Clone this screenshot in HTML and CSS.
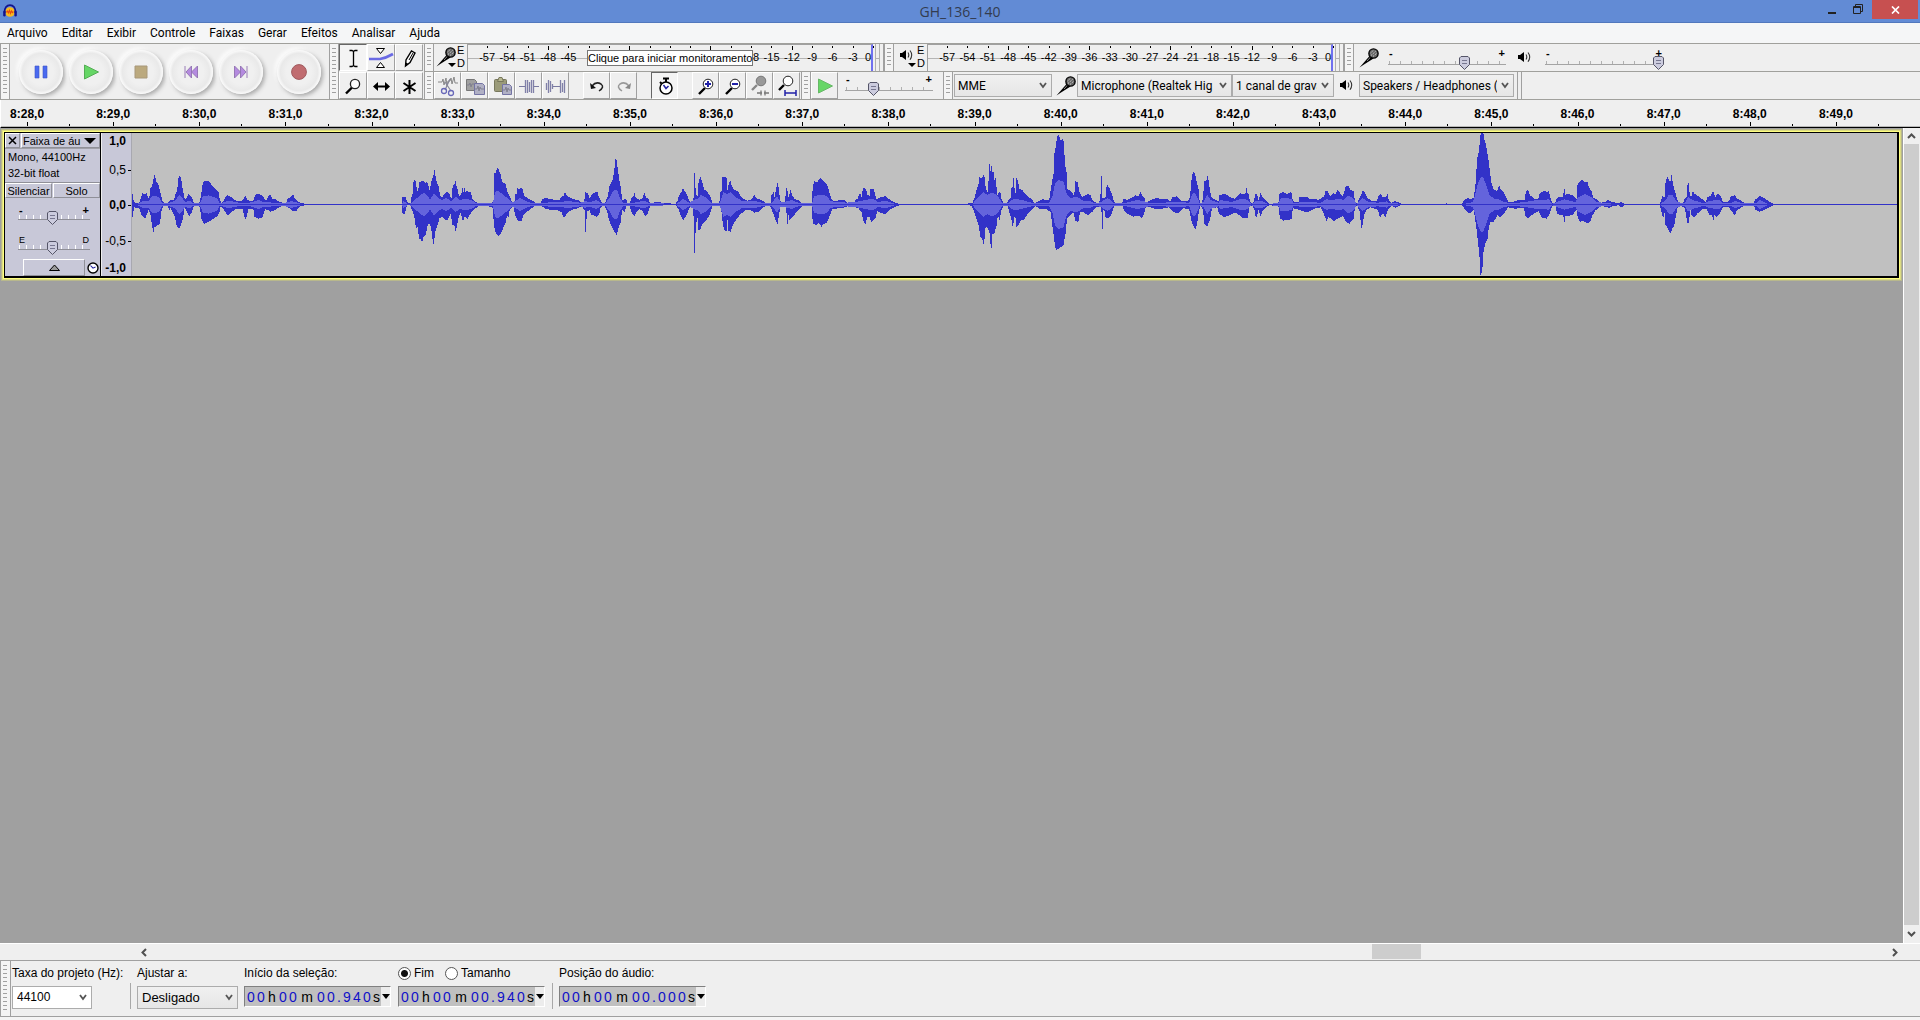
FILE: index.html
```html
<!DOCTYPE html>
<html lang="pt">
<head>
<meta charset="utf-8">
<title>GH_136_140</title>
<link rel="stylesheet" href="styles.css">
</head>
<body>
<svg class="defs" aria-hidden="true">
  <symbol id="mic" viewBox="0 0 20 20">
    <path d="M0.5 19.5 L11 7.5 L14.5 10.5 L5 16.5 Z" fill="#000"/>
    <path d="M8 13 L12 8.6" stroke="#888" stroke-width="1"/>
    <circle cx="14.5" cy="5.5" r="4.6" fill="#666" stroke="#000" stroke-width="1.4"/>
    <path d="M11.5 5 L15 1.8 M12 7.5 L17 3 M14 8.5 L18 5" stroke="#ddd" stroke-width="0.9" stroke-dasharray="1.4 1"/>
  </symbol>
  <symbol id="speaker" viewBox="0 0 13 12">
    <path d="M0 4 H2 L6 1 V11 L2 8 H0 Z" fill="#000"/>
    <path d="M8 3.5 Q9.6 6 8 8.5 M10 1.5 Q13.4 6 10 10.8" fill="none" stroke="#333" stroke-width="1.1"/>
  </symbol>
  <symbol id="clock" viewBox="0 0 12 12">
    <circle cx="6" cy="6" r="5" fill="#fff" stroke="#000" stroke-width="1.4"/>
    <path d="M3.5 3.5 L6 6.2 L8.5 5" fill="none" stroke="#2222a0" stroke-width="1.1"/>
  </symbol>
</svg>

<header class="titlebar">
  <svg class="logo" viewBox="0 0 14 14"><circle cx="7" cy="8" r="4.8" fill="#f8b81c"/><path d="M3.4 8.4 l1-1.4 1 2 1-2.600 1 3 1-2.400 1 1.600 1-1" fill="none" stroke="#e84a10" stroke-width="1.1"/><path d="M1.600 9 C0.500 -1.600 13.500 -1.600 12.400 9" fill="none" stroke="#14148c" stroke-width="1.800"/><rect x="0.200" y="6.500" width="2.400" height="6" rx="1.200" fill="#14148c"/><rect x="11.400" y="6.500" width="2.400" height="6" rx="1.200" fill="#14148c"/></svg>
  <h1>GH_136_140</h1>
  <div class="winbtns">
    <button class="wbtn" aria-label="Minimizar"><svg width="10" height="12"><rect x="1" y="9" width="8" height="2" fill="#222"/></svg></button>
    <button class="wbtn" aria-label="Restaurar"><svg width="11" height="12"><path d="M0.5 3.5 h7 v7 h-7 Z M0.5 4.5 h7 M2.5 3 V1.5 H9.5 V8.5 H8" fill="none" stroke="#222"/></svg></button>
    <button class="wbtn close" aria-label="Fechar"><svg width="9" height="8"><path d="M1 0.5 L8 7.5 M8 0.5 L1 7.5" stroke="#fff" stroke-width="1.7"/></svg></button>
  </div>
</header>

<nav class="menu">
  <a href="#">Arquivo</a><a href="#">Editar</a><a href="#">Exibir</a><a href="#">Controle</a><a href="#">Faixas</a><a href="#">Gerar</a><a href="#">Efeitos</a><a href="#">Analisar</a><a href="#">Ajuda</a>
</nav>

<section class="dock">
  <div class="grip"></div>
  <div class="transport">
    <button class="round" aria-label="Pausar"><svg width="16" height="16"><path d="M2 2h4v12H2z M10 2h4v12h-4z" fill="#4a6af0" stroke="#3c54c8" stroke-width="0.6"/></svg></button>
    <button class="round" aria-label="Reproduzir"><svg width="16" height="16"><path d="M1.5 1 L15.5 8 L1.5 15 Z" fill="#66d666" stroke="#55ad55"/></svg></button>
    <button class="round" aria-label="Parar"><svg width="16" height="16"><path d="M2 2h12v12H2z" fill="#bba97e" stroke="#a8987a"/></svg></button>
    <button class="round" aria-label="Início"><svg width="16" height="16"><path d="M2 2 V14 M8.5 2 V14 L3 8 Z M14.5 2 V14 L8.5 8 Z" fill="#b48adf" stroke="#9070b0" stroke-width="0.9"/></svg></button>
    <button class="round" aria-label="Fim"><svg width="16" height="16"><path d="M14 2 V14 M7.5 2 V14 L13 8 Z M1.5 2 V14 L7.5 8 Z" fill="#b48adf" stroke="#9070b0" stroke-width="0.9"/></svg></button>
    <button class="round rec" aria-label="Gravar"><svg width="16" height="16"><circle cx="8" cy="8" r="7.4" fill="#c06c70" stroke="#a05a5e"/></svg></button>
  </div>
  <div class="grip"></div>
  <div class="tools">
    <button class="tb on" aria-label="Seleção"><svg width="24" height="22"><path d="M8.500 3.500 H11 L12.500 4.500 L14 3.500 H16.500 M12.500 4 V19 M8.500 19.500 H11 L12.500 18.500 L14 19.500 H16.500" fill="none" stroke="#000" stroke-width="1.3"/></svg></button>
    <button class="tb" aria-label="Envelope"><svg width="26" height="22"><path d="M1 12 H12 Q18 11 25 7" fill="none" stroke="#6a6ae4" stroke-width="2.6"/><path d="M8.500 1.500 H16.500 L12.500 6.500 Z M8.500 20.500 H16.500 L12.500 15.500 Z" fill="#fff" stroke="#000"/></svg></button>
    <button class="tb" aria-label="Desenho"><svg width="24" height="22"><path d="M8.500 19 L9 13 L14.500 4 L18 6 L13 15.500 Z" fill="#fff" stroke="#000" stroke-width="1.4"/><path d="M8.500 19.500 L9 15.500 L11.500 17 Z" fill="#000"/><path d="M12 13 L16 6" stroke="#000"/></svg></button>
    <button class="tb" aria-label="Zoom"><svg width="24" height="22"><path d="M5 18.500 L11 12.500" stroke="#000" stroke-width="2.4"/><circle cx="14" cy="9" r="4.600" fill="#fff" stroke="#222" stroke-width="1.300"/></svg></button>
    <button class="tb" aria-label="Mover"><svg width="24" height="22"><path d="M6 11.500 H19" stroke="#000" stroke-width="2"/><path d="M4 11.500 L9 7 V16 Z M21 11.500 L16 7 V16 Z" fill="#000"/></svg></button>
    <button class="tb" aria-label="Multiferramenta"><svg width="24" height="22"><path d="M12.500 5 V19 M6.500 8 L18.500 16 M18.500 8 L6.500 16" stroke="#000" stroke-width="2"/></svg></button>
  </div>
  <div class="dockrows">
    <div class="row">
      <div class="grip"></div>
      <div class="meterbar">
        <button class="micbtn" aria-label="Medidor de gravação"><svg width="20" height="20"><use href="#mic"/></svg><i class="drop"></i></button>
        <div class="lr"><span>E</span><span>D</span></div>
        <div class="meter"><span>-57</span><span>-54</span><span>-51</span><span class="maj">-48</span><span>-45</span><span></span><span></span><span class="maj"></span><span></span><span></span><span></span><span class="maj"></span><span></span><span>-18</span><span>-15</span><span class="maj">-12</span><span>-9</span><span>-6</span><span>-3</span><span class="zero">0</span></div>
        <div class="clip"></div>
        <div class="tip" role="tooltip">Clique para iniciar monitoramento</div>
      </div>
      <div class="grip"></div>
      <div class="meterbar">
        <button class="micbtn spk" aria-label="Medidor de reprodução"><svg width="13" height="12"><use href="#speaker"/></svg><i class="drop"></i></button>
        <div class="lr"><span>E</span><span>D</span></div>
        <div class="meter"><span>-57</span><span>-54</span><span>-51</span><span class="maj">-48</span><span>-45</span><span>-42</span><span>-39</span><span class="maj">-36</span><span>-33</span><span>-30</span><span>-27</span><span class="maj">-24</span><span>-21</span><span>-18</span><span>-15</span><span class="maj">-12</span><span>-9</span><span>-6</span><span>-3</span><span class="zero">0</span></div>
        <div class="clip"></div>
      </div>
      <div class="grip"></div>
      <div class="mixer">
        <svg width="20" height="20"><use href="#mic"/></svg>
        <label class="slide"><span>-</span><span>+</span><input type="range" min="0" max="100" value="66" aria-label="Volume de gravação"></label>
        <svg class="spkicon" width="13" height="12"><use href="#speaker"/></svg>
        <label class="slide"><span>-</span><span>+</span><input type="range" min="0" max="100" value="100" aria-label="Volume de reprodução"></label>
      </div>
    </div>
    <div class="row">
      <div class="grip"></div>
      <div class="edit">
        <button class="tb" aria-label="Recortar"><svg width="24" height="22"><path d="M2 7 h4 l1-3 1 6 2-7 1 8 1-5 h2 l1-3 1 6 2-7 1 6 h3" fill="none" stroke="#888"/><path d="M14 4 L9 15 M9 7 L15 16" stroke="#889" stroke-width="1.200"/><circle cx="8" cy="16" r="2.500" fill="none" stroke="#6868b8" stroke-width="1.300"/><circle cx="15" cy="18" r="2.500" fill="none" stroke="#6868b8" stroke-width="1.300"/></svg></button>
        <button class="tb" aria-label="Copiar"><svg width="24" height="22"><path d="M3.500 4.500 h8 l2 2 v9 h-10 z" fill="#a0a0a0" stroke="#777"/><path d="M11.500 8.500 h8 l2 2 v9 h-10 z" fill="#b0b0c4" stroke="#7474a4"/><path d="M4 10 h2l1-2 1 4 1-3 h2 M12 14 h2l1-3 1 5 1-4 1 2 h3" fill="none" stroke="#80808f"/></svg></button>
        <button class="tb" aria-label="Colar"><svg width="24" height="22"><rect x="4.500" y="4.500" width="12" height="12" rx="1" fill="#9a9a78" stroke="#77775c"/><path d="M7.500 6.500 L9 2.500 H12 L13.500 6.500 Z" fill="#b8b890" stroke="#77775c"/><path d="M12.500 9.500 h7 l2 2 v8 h-9 z" fill="#b0b0c4" stroke="#7474a4"/><path d="M13 15 h2l1-3 1 5 1-4 1 2 h2" fill="none" stroke="#80808f"/></svg></button>
        <button class="tb" aria-label="Aparar"><svg width="24" height="22"><path d="M2 11.500 H8 M17 11.500 H22" stroke="#7878a0"/><path d="M8.500 11 V5 M8.500 11 V18 M10.500 5 V18 M12.500 7 V17 M14.500 5 V18 M16.500 5 V18" stroke="#8080a8" stroke-width="1.300"/></svg></button>
        <button class="tb" aria-label="Silenciar seleção"><svg width="24" height="22"><path d="M8 11.500 H17" stroke="#7878a0"/><path d="M2.500 8 V15 M4.500 5 V18 M6.500 6 V17 M8.500 9 V14 M16.500 5 V18 M18.500 8 V17 M20.500 5 V18" stroke="#8080a8" stroke-width="1.300"/></svg></button>
        <button class="tb gap" aria-label="Desfazer"><svg width="24" height="22"><path d="M7 11 Q11 6 16 9 Q20 12 14 16" fill="none" stroke="#222" stroke-width="1.500"/><path d="M5 8 L6 14 L11 13 Z" fill="#111"/></svg></button>
        <button class="tb" aria-label="Refazer"><svg width="24" height="22"><path d="M17 11 Q13 6 8 9 Q4 12 10 16" fill="none" stroke="#999" stroke-width="1.500"/><path d="M19 8 L18 14 L13 13 Z" fill="#888"/></svg></button>
        <button class="tb gap on" aria-label="Sincronizar faixas"><svg width="24" height="22"><path d="M10 3.500 H16 M13 4 V7 M7 7 L8.500 8.500" stroke="#000" stroke-width="2"/><circle cx="13" cy="13" r="6" fill="#fff" stroke="#000" stroke-width="1.500"/><path d="M10.500 10 L13 13.500 L15.500 11" fill="none" stroke="#2222a0" stroke-width="1.500"/></svg></button>
        <button class="tb gap" aria-label="Ampliar"><svg width="24" height="22"><path d="M5 19 L11 13" stroke="#000" stroke-width="2.400"/><circle cx="14" cy="9" r="4.800" fill="#fff" stroke="#222"/><path d="M11 9 H17 M14 6 V12" stroke="#2222a8" stroke-width="2"/></svg></button>
        <button class="tb" aria-label="Reduzir"><svg width="24" height="22"><path d="M5 19 L11 13" stroke="#000" stroke-width="2.400"/><circle cx="14" cy="9" r="4.800" fill="#fff" stroke="#222"/><path d="M11 9 H17" stroke="#2222a8" stroke-width="2"/></svg></button>
        <button class="tb" aria-label="Ajustar seleção"><svg width="24" height="22"><path d="M4 15 L9 10" stroke="#888" stroke-width="2.400"/><circle cx="13" cy="6" r="4.800" fill="#999" stroke="#777"/><path d="M9 18 H14 M16 18 H21 M13 15.500 V20.500 M17 15.500 V20.500" stroke="#777" stroke-width="1.300"/></svg></button>
        <button class="tb" aria-label="Ajustar projeto"><svg width="24" height="22"><path d="M4 15 L9 10" stroke="#000" stroke-width="2.400"/><circle cx="13" cy="6" r="4.800" fill="#fff" stroke="#222"/><path d="M10 18 H21 M10 15 V21 M21 15 V21" stroke="#2222a8" stroke-width="1.500"/></svg></button>
      </div>
      <div class="grip"></div>
      <div class="speed">
        <button class="tb" aria-label="Reproduzir na velocidade"><svg width="24" height="22"><path d="M5.500 4 L19.500 11 L5.500 18 Z" fill="#66d666" stroke="#66b866"/></svg></button>
        <label class="slide short"><span>-</span><span>+</span><input type="range" min="0" max="100" value="31" aria-label="Velocidade"></label>
      </div>
      <div class="grip"></div>
      <div class="devices">
        <select class="w-host" aria-label="Host de áudio"><option>MME</option></select>
        <svg class="m1" width="20" height="20"><use href="#mic"/></svg>
        <select class="w-in" aria-label="Dispositivo de gravação"><option>Microphone (Realtek Hig</option></select><select class="w-ch" aria-label="Canais de gravação"><option>1 canal de gravação</option></select>
        <svg class="m2" width="13" height="12"><use href="#speaker"/></svg>
        <select class="w-out" aria-label="Dispositivo de reprodução"><option>Speakers / Headphones (</option></select>
      </div>
    </div>
  </div>
</section>

<div class="timeline"><div class="ticks">
  <span>8:28,0</span><span>8:29,0</span><span>8:30,0</span><span>8:31,0</span><span>8:32,0</span><span>8:33,0</span><span>8:34,0</span><span>8:35,0</span><span>8:36,0</span><span>8:37,0</span><span>8:38,0</span><span>8:39,0</span><span>8:40,0</span><span>8:41,0</span><span>8:42,0</span><span>8:43,0</span><span>8:44,0</span><span>8:45,0</span><span>8:46,0</span><span>8:47,0</span><span>8:48,0</span><span>8:49,0</span>
</div></div>

<main class="work">
  <div class="tracks">
    <article class="track">
      <div class="panel">
        <div class="head">
          <button class="x" aria-label="Fechar faixa"><svg width="9" height="9"><path d="M1 1 L8 8 M8 1 L1 8" stroke="#000" stroke-width="1.500"/></svg></button>
          <button class="name">Faixa de áu<i class="drop"></i></button>
        </div>
        <div class="info">Mono, 44100Hz<br>32-bit float</div>
        <div class="mute"><button>Silenciar</button><button>Solo</button></div>
        <label class="slide small"><span>-</span><span>+</span><input type="range" min="0" max="100" value="47" aria-label="Ganho"></label>
        <label class="slide small pan"><span>E</span><span>D</span><input type="range" min="0" max="100" value="47" aria-label="Panorâmica"></label>
        <div class="foot"><button class="fold" aria-label="Recolher"><svg width="11" height="7"><path d="M0.500 6.500 L5.500 1 L10.500 6.500 Z" fill="#999" stroke="#000"/></svg></button><svg width="12" height="12"><use href="#clock"/></svg></div>
      </div>
      <div class="vruler"><b>1,0</b><span class="t">0,5</span><b class="t">0,0</b><span class="t">-0,5</span><b>-1,0</b></div>
      <div class="wave">
        <svg width="1765" height="143" shape-rendering="crispEdges">
          <svg x="-132" y="-13" width="320" height="170" viewBox="0 0 960 510" preserveAspectRatio="none">
            <polygon class="peak" points="396,222 399,222 401,245 405,249 420,247 422,235 427,220 434,222 441,220 444,236 449,228 451,205 456,200 460,178 463,165 466,170 468,184 474,190 478,205 484,228 488,246 495,250 504,248 511,240 522,240 526,222 532,210 534,180 538,168 543,172 546,195 550,215 554,238 561,232 566,222 570,225 577,235 580,247 592,251 598,247 602,232 606,205 609,187 614,181 622,184 628,184 636,196 645,205 655,214 659,238 664,249 670,243 676,232 682,225 692,230 700,238 712,244 726,243 732,235 736,227 742,240 752,244 761,240 765,224 775,221 787,226 795,240 801,240 805,228 812,224 816,236 826,238 840,246 858,250 864,234 872,232 880,223 884,236 892,244 902,249 914,252 960,252 960,255 914,255 900,258 890,272 882,275 872,268 864,262 858,256 840,260 826,270 812,275 803,270 795,268 787,292 775,296 763,290 760,266 745,268 738,298 735,298 728,268 710,266 695,275 684,288 672,270 662,258 658,280 650,290 640,296 628,304 612,312 604,295 600,262 592,256 580,260 576,275 568,290 560,275 554,262 550,290 544,312 538,326 530,318 526,296 520,280 511,262 508,272 504,258 490,258 484,275 480,310 470,318 463,322 460,338 456,315 452,288 446,268 440,285 436,296 424,285 418,266 402,262 398,292 396,285"/>
            <polygon id="ra" class="rms" points="400,253 416,250 430,242 445,244 455,230 465,226 478,234 486,248 505,250 525,242 538,224 548,236 556,246 570,242 580,250 600,250 608,230 625,226 650,234 660,250 685,242 715,248 750,248 775,240 790,246 850,250 875,243 900,250 910,253"/>
            <use href="#ra" transform="matrix(1 0 0 -1 0 507)"/>
          </svg>
          <svg x="168" y="-13" width="560" height="170" viewBox="0 0 1568 510" preserveAspectRatio="none">
            <polygon class="peak" points="0,250 10,250 11,252 286,252 287,232 296,231 299,243 303,250 311,249 312,232 317,218 318,180 325,182 327,214 331,210 334,187 340,183 348,184 350,190 355,186 359,192 362,214 366,196 369,180 374,166 376,147 379,164 382,182 388,200 392,225 398,232 404,222 412,216 418,222 424,236 427,204 431,192 434,192 435,180 438,198 442,208 445,232 452,220 455,204 458,216 460,200 463,216 468,212 473,218 479,215 482,236 490,246 505,250 520,250 536,249 542,244 543,160 549,158 552,142 557,150 562,165 566,184 572,190 576,192 580,214 588,232 594,246 600,250 602,224 607,222 608,204 612,208 618,204 623,206 628,228 634,232 640,236 650,242 660,248 672,250 680,236 690,234 705,238 715,240 726,240 732,230 738,228 742,216 748,228 756,232 766,238 780,240 788,250 796,249 798,216 806,220 810,234 818,224 824,218 833,216 836,228 842,240 846,250 854,250 858,236 863,226 865,204 870,190 876,178 880,150 883,117 887,122 890,150 894,178 899,208 902,240 908,238 914,238 916,250 924,250 927,234 933,230 936,218 940,232 950,240 958,236 964,218 969,232 975,236 980,249 1000,246 1014,248 1034,250 1052,252 1058,240 1061,226 1068,216 1072,206 1078,214 1084,226 1092,246 1098,249 1100,236 1103,232 1103,158 1106,158 1108,222 1113,228 1115,190 1118,182 1120,168 1124,180 1128,192 1131,208 1140,214 1148,228 1155,248 1174,250 1177,218 1181,210 1182,172 1190,170 1195,176 1197,210 1201,190 1205,180 1208,196 1214,208 1226,214 1234,228 1242,236 1252,242 1262,240 1268,232 1272,222 1276,234 1286,238 1296,242 1305,251 1318,250 1320,226 1326,216 1328,236 1333,206 1337,190 1341,205 1344,242 1350,250 1358,248 1361,206 1364,198 1366,228 1370,232 1372,204 1378,226 1386,238 1396,240 1402,248 1412,252 1432,252 1434,222 1437,196 1440,182 1448,188 1452,180 1458,174 1464,180 1474,192 1480,206 1484,226 1490,240 1500,244 1510,240 1525,240 1532,250 1553,252 1556,238 1562,236 1564,226 1568,222 1568,272 1564,264 1556,262 1552,255 1534,256 1528,262 1510,264 1490,268 1480,296 1474,308 1464,314 1460,320 1452,308 1444,316 1436,310 1432,256 1412,255 1400,264 1386,282 1378,294 1370,300 1366,270 1365,312 1361,264 1356,255 1346,258 1342,280 1337,311 1332,302 1326,282 1320,268 1316,255 1300,260 1286,274 1272,278 1262,270 1248,270 1234,282 1222,298 1212,314 1206,335 1199,332 1197,300 1195,335 1188,330 1184,312 1180,275 1175,256 1155,258 1148,282 1142,294 1134,305 1126,314 1120,332 1115,328 1113,294 1108,316 1106,398 1103,398 1102,290 1099,256 1090,264 1084,282 1074,300 1068,292 1060,268 1052,255 1000,256 980,258 974,280 966,288 958,272 950,268 942,276 936,288 928,276 922,256 914,258 909,276 902,268 898,308 892,322 887,345 880,334 872,318 865,300 860,275 852,256 842,262 838,282 830,290 816,284 810,270 803,276 801,335 798,335 797,272 790,258 780,264 766,268 752,276 745,284 739,294 732,276 718,270 690,268 676,258 660,256 650,264 634,276 626,284 620,304 610,302 602,284 598,258 592,264 585,275 583,302 580,282 576,306 570,322 564,338 555,348 548,338 543,318 540,264 520,255 505,256 492,264 480,276 468,298 462,288 456,305 450,278 444,292 440,316 436,335 433,318 427,314 422,282 412,302 404,296 396,290 390,296 384,320 378,336 375,372 372,372 370,340 364,312 358,314 352,344 346,350 342,369 338,358 333,356 330,318 325,326 320,290 314,270 308,256 300,256 292,284 287,280 286,255 11,255 10,257 0,257"/>
            <polygon id="rb" class="rms" points="286,253 288,244 296,246 300,252 312,250 320,240 330,232 346,218 355,226 364,238 376,220 385,232 396,240 410,234 424,244 435,230 448,240 465,236 480,240 495,250 540,250 546,216 552,212 565,220 580,234 592,246 602,244 616,234 630,242 650,250 680,248 735,246 745,242 785,248 798,244 815,246 830,240 845,250 856,248 866,234 878,212 888,210 896,234 904,248 926,250 945,246 965,242 978,250 1056,251 1072,236 1090,248 1102,240 1115,236 1122,224 1135,232 1152,248 1176,248 1186,216 1195,222 1207,216 1220,232 1240,244 1272,242 1300,250 1322,248 1336,228 1346,248 1362,244 1376,240 1396,248 1434,248 1440,228 1458,224 1476,228 1486,244 1530,248 1568,244 1568,253"/>
            <use href="#rb" transform="matrix(1 0 0 -1 0 507)"/>
          </svg>
          <svg x="728" y="-13" width="560" height="170" viewBox="0 0 1568 510" preserveAspectRatio="none">
            <polygon class="peak" points="0,222 2,220 4,234 8,206 12,202 18,210 20,224 27,228 29,206 38,206 42,222 46,238 56,232 72,228 82,238 95,246 112,252 302,252 305,249 315,248 320,236 326,212 332,190 334,172 342,174 345,165 350,172 352,208 358,216 360,180 361,130 364,132 365,156 368,136 371,156 373,148 376,180 380,174 382,200 385,224 390,216 394,218 396,238 402,250 412,250 415,240 422,234 424,204 428,200 429,174 432,174 433,220 436,220 437,174 442,180 446,206 456,212 464,224 472,232 482,238 488,250 500,244 512,238 530,240 534,208 540,172 544,150 544,104 548,80 552,50 556,45 562,60 568,58 571,64 574,138 578,150 581,208 590,212 596,222 600,226 603,184 610,186 614,216 622,232 630,226 638,222 646,226 650,238 660,248 668,250 673,238 675,168 678,168 679,234 688,232 691,190 698,204 704,218 710,240 714,250 734,250 738,236 748,240 760,234 772,226 780,228 785,216 790,226 796,232 800,248 812,242 824,236 832,232 842,238 862,238 868,244 876,230 880,232 886,228 894,238 904,244 918,242 924,232 927,190 930,165 935,153 939,165 943,186 948,208 950,238 955,252 960,236 964,184 970,180 973,168 976,180 980,210 984,232 996,240 1004,244 1006,226 1020,222 1030,226 1040,234 1050,236 1056,228 1064,220 1076,222 1080,220 1082,202 1084,220 1088,222 1092,246 1100,250 1104,238 1108,220 1112,222 1116,240 1122,218 1128,234 1136,240 1146,251 1166,251 1172,246 1174,222 1184,216 1196,222 1208,216 1212,244 1228,246 1230,232 1240,230 1250,230 1262,238 1272,236 1284,240 1292,234 1300,228 1304,212 1310,214 1316,228 1324,220 1332,222 1338,208 1344,220 1352,228 1356,218 1359,200 1367,198 1374,210 1382,214 1386,246 1392,250 1400,232 1404,222 1408,210 1414,218 1420,234 1432,242 1448,242 1452,228 1458,220 1464,232 1472,230 1478,222 1480,238 1488,250 1496,243 1506,246 1516,252 1568,252 1568,255 1514,255 1500,263 1490,258 1478,268 1472,292 1464,280 1456,292 1450,270 1430,262 1418,270 1412,284 1406,323 1403,323 1400,278 1392,256 1386,262 1382,298 1374,306 1370,312 1360,305 1352,288 1344,292 1334,298 1328,305 1322,300 1312,290 1306,302 1298,280 1290,262 1272,266 1256,276 1240,274 1230,270 1212,264 1208,298 1186,302 1176,296 1172,260 1146,255 1134,264 1126,276 1122,290 1116,270 1109,296 1104,268 1098,256 1090,262 1086,294 1072,294 1060,284 1050,278 1034,286 1020,292 1006,282 1000,262 986,264 980,298 972,320 965,314 960,270 953,255 948,280 944,312 939,329 934,318 928,304 922,268 905,264 896,276 886,280 874,272 864,262 845,266 830,268 812,262 800,260 796,278 789,296 782,288 764,290 750,282 740,274 734,256 712,256 704,284 696,294 688,296 684,268 680,270 680,326 677,326 676,262 660,262 650,276 638,286 626,276 616,276 611,308 603,302 598,278 590,284 580,294 576,338 570,374 562,382 550,390 546,380 543,350 538,312 534,276 520,266 505,268 492,258 486,264 472,278 460,298 450,302 442,318 438,320 434,280 428,322 424,300 418,275 412,256 402,258 396,270 391,300 386,286 382,320 376,340 370,344 369,384 366,384 364,345 358,325 352,318 347,378 342,355 337,352 333,320 326,296 318,270 312,258 302,255 112,255 95,262 82,270 70,284 58,278 48,274 44,292 32,306 26,290 20,290 16,312 10,304 4,276 0,272"/>
            <polygon id="rc" class="rms" points="0,253 0,244 14,240 36,236 50,246 72,242 92,250 112,253 314,253 330,232 345,216 356,224 370,218 382,224 400,250 416,248 430,236 442,238 460,242 486,250 530,248 540,225 546,190 556,180 570,185 578,220 590,234 606,230 625,242 645,244 660,250 674,246 694,234 710,248 740,250 775,240 796,244 812,250 885,246 922,248 930,222 938,218 946,236 952,251 962,246 972,224 982,240 1004,248 1010,240 1040,246 1070,236 1086,240 1096,252 1108,244 1125,242 1140,251 1172,250 1178,234 1208,236 1214,249 1245,246 1290,248 1306,238 1325,240 1340,236 1355,240 1366,226 1382,236 1390,252 1406,234 1425,246 1450,248 1475,244 1482,250 1500,248 1512,253"/>
            <use href="#rc" transform="matrix(1 0 0 -1 0 507)"/>
          </svg>
          <svg x="1248" y="-13" width="540" height="170" viewBox="0 0 1568 510" preserveAspectRatio="none">
            <polygon class="peak" points="80,252 192,252 193,249 195,252 238,252 241,247 245,240 254,234 262,238 272,234 275,212 279,180 280,150 283,112 288,90 290,60 293,38 300,38 303,58 308,75 312,100 316,124 319,155 324,190 330,208 340,214 346,196 350,206 358,216 366,230 372,245 385,246 400,241 420,240 424,212 430,210 436,226 448,236 460,236 464,220 474,214 480,212 484,218 490,212 494,232 500,250 508,251 512,236 520,230 532,232 534,206 537,206 538,224 548,222 560,226 571,236 573,196 580,184 586,178 594,186 602,184 606,200 614,214 620,234 632,240 640,248 656,246 660,240 670,244 676,246 690,250 702,246 710,252 813,252 816,240 820,228 826,234 829,190 834,170 840,182 845,182 845,165 848,165 850,190 853,200 860,228 868,250 880,251 884,236 890,232 892,200 895,183 898,205 900,230 905,228 908,212 914,222 924,228 936,238 946,246 950,232 960,228 967,212 970,222 974,230 980,222 988,226 996,246 1014,244 1018,230 1026,228 1030,224 1036,236 1048,242 1066,252 1084,252 1090,238 1104,228 1118,236 1130,244 1144,252 1568,252 1568,255 1144,255 1130,262 1116,270 1102,275 1090,270 1086,255 1064,255 1046,264 1036,272 1030,286 1022,274 1012,262 996,260 988,278 978,292 970,284 969,302 964,286 956,284 948,268 936,268 922,280 912,292 904,284 900,262 898,308 892,310 888,280 884,262 866,256 860,282 854,320 848,326 845,342 838,332 834,322 829,314 826,276 822,296 816,268 812,255 710,255 702,262 692,256 676,258 664,264 655,260 640,258 625,272 616,288 610,306 602,310 590,302 580,306 574,290 570,268 560,284 548,288 538,288 536,308 532,286 514,282 510,258 500,258 492,284 484,296 470,292 460,274 448,280 440,286 430,294 422,288 418,264 390,266 372,262 362,278 348,294 342,284 330,306 320,305 315,330 312,358 305,372 300,400 298,440 294,462 291,465 289,410 284,360 280,325 276,295 272,268 264,280 256,278 246,268 240,258 236,255 80,255"/>
            <polygon id="rd" class="rms" points="240,253 270,246 276,225 284,190 294,170 300,172 308,195 318,225 332,236 345,238 360,246 380,250 424,246 440,242 470,240 490,238 500,252 514,246 535,238 568,246 574,232 596,222 612,230 630,246 660,250 705,252 814,252 830,240 838,226 850,226 862,246 884,250 895,232 908,240 940,250 960,242 985,240 996,250 1020,248 1032,242 1050,250 1090,250 1104,240 1130,253"/>
            <use href="#rd" transform="matrix(1 0 0 -1 0 507)"/>
          </svg>
        </svg>
      </div>
    </article>
  </div>
  <div class="vscroll"><button aria-label="Rolar para cima"><svg width="9" height="6"><path d="M1 5 L4.500 1.500 L8 5" fill="none" stroke="#505050" stroke-width="2"/></svg></button><div class="thumb"></div><button aria-label="Rolar para baixo"><svg width="9" height="6"><path d="M1 1 L4.500 4.500 L8 1" fill="none" stroke="#505050" stroke-width="2"/></svg></button></div>
</main>

<div class="hscroll"><button aria-label="Rolar para a esquerda"><svg width="6" height="9"><path d="M5 1 L1.500 4.500 L5 8" fill="none" stroke="#505050" stroke-width="2"/></svg></button><div class="lane"><div class="thumb"></div></div><button aria-label="Rolar para a direita"><svg width="6" height="9"><path d="M1 1 L4.500 4.500 L1 8" fill="none" stroke="#505050" stroke-width="2"/></svg></button></div>

<footer class="selbar">
  <div class="grip"></div>
  <div class="field rate"><label for="rate">Taxa do projeto (Hz):</label><select id="rate" class="white"><option>44100</option></select></div>
  <div class="sep"></div>
  <div class="field snap"><label for="snap">Ajustar a:</label><select id="snap"><option>Desligado</option></select></div>
  <div class="field"><span class="lbl">Início da seleção:</span>
    <div class="time"><b>0</b><b>0</b><i>h</i><b>0</b><b>0</b><i class="m">m</i><b>0</b><b>0</b><b class="dot">.</b><b>9</b><b>4</b><b>0</b><i class="s">s</i><button aria-label="Formato"></button></div></div>
  <div class="field"><div class="radios"><label><input type="radio" name="end" checked>Fim</label><label><input type="radio" name="end">Tamanho</label></div>
    <div class="time"><b>0</b><b>0</b><i>h</i><b>0</b><b>0</b><i class="m">m</i><b>0</b><b>0</b><b class="dot">.</b><b>9</b><b>4</b><b>0</b><i class="s">s</i><button aria-label="Formato"></button></div></div>
  <div class="sep"></div>
  <div class="field"><span class="lbl">Posição do áudio:</span>
    <div class="time"><b>0</b><b>0</b><i>h</i><b>0</b><b>0</b><i class="m">m</i><b>0</b><b>0</b><b class="dot">.</b><b>0</b><b>0</b><b>0</b><i class="s">s</i><button aria-label="Formato"></button></div></div>
</footer>
<div class="status"></div>
</body>
</html>
```
FILE: styles.css
```css
* { box-sizing: border-box; }
body {
  margin: 0; height: 100vh; overflow: hidden;
  display: flex; flex-direction: column;
  background: #efefef; color: #000;
  font: 11px "Liberation Sans", Arial, sans-serif;
}
button { padding: 0; margin: 0; border: 0; background: none; font: inherit; color: inherit; display: flex; align-items: center; justify-content: center; }
svg { display: block; flex: none; }
.defs { position: absolute; width: 0; height: 0; }

/* Title bar and menu */
.titlebar { flex: none; height: 23px; background: #628bd5; border-bottom: 1px solid #5178bd; display: grid; grid-template-columns: 1fr auto 1fr; align-items: start; }
.logo { width: 14px; height: 14px; margin: 4px 0 0 3px; }
.titlebar h1 { margin: 0; font: 14px/23px "Open Sans", "Noto Sans", sans-serif; color: #333c50; }
.winbtns { justify-self: end; display: flex; margin-right: 2px; }
.wbtn { width: 26px; height: 18px; }
.wbtn.close { width: 46px; height: 19px; margin-left: 1px; background: #c75050; }
.menu { flex: none; height: 20px; background: #f5f6f7; display: flex; gap: 14px; padding-left: 7px; font: 12px/20px Roboto, "Noto Sans", sans-serif; }
.menu a { color: #000; text-decoration: none; }

/* Tool dock */
.dock { flex: none; display: flex; border-top: 1px solid #a0a09c; border-bottom: 1px solid #a0a09c; }
.grip { flex: none; width: 10px; border: 1px solid #a0a0a0; border-width: 0 1px; background: repeating-linear-gradient(#a0a0a0 0 1px, transparent 1px 4px) 2px 4px / 4px calc(100% - 8px) no-repeat, #f4f4f4; }
.transport { width: 319px; display: flex; align-items: center; gap: 6px; padding-left: 9px; }
.round { width: 44px; height: 44px; border-radius: 50%; background: radial-gradient(circle at 50% 50%, #f0f0f0 40%, #e9e9e9 60%, #fafafa 70%); box-shadow: 2px 2px 4px #a8a8a8, -2px -2px 4px #fff; }
.round.rec { margin-left: 8px; }
.tools { display: grid; grid-template-columns: repeat(3, 28px); grid-auto-rows: 27px; row-gap: 1px; width: 85px; }
.tb { flex: none; width: 27px; height: 27px; border: 1px solid #fff; border-right-color: #a0a0a0; border-bottom-color: #a0a0a0; overflow: hidden; }
.tools .tb { width: 28px; }
.tb.on { border-color: #666 #fff #fff #666; background: #f4f4f4; }
.tb.gap { margin-left: 14px; }
.dockrows { flex: 1; min-width: 0; }
.row { height: 27px; display: flex; }
.row + .row { height: 28px; border-top: 1px solid #a0a09c; }
.drop { border: 5px solid transparent; border-top-color: #000; border-bottom: 0; }

.meterbar { width: 450px; display: flex; position: relative; border-right: 1px solid #a0a0a0; }
.micbtn { width: 23px; position: relative; justify-content: flex-start; padding: 0 0 2px 2px; }
.micbtn .drop { position: absolute; left: 14px; bottom: 4px; border-width: 4px 4px 0; }
.micbtn.spk { padding: 0 0 5px 6px; }
.lr { width: 10px; display: grid; grid-template-rows: 13px 13px; line-height: 13px; }
.meter { width: 406px; position: relative; display: grid; grid-template-columns: repeat(19, 1fr) 8px; padding-left: 9px; border: 1px solid #a0a0a0; border-width: 1px 0 0 1px; background: linear-gradient(#b4b4b4, #b4b4b4) 0 13px / 100% 1px no-repeat; border-right: 2px solid #7070f0; }
.meter span { position: relative; line-height: 25px; text-align: center; }
.meter .zero { text-align: right; }
.meter span::before { content: ""; position: absolute; left: 10px; top: 1px; width: 1px; height: 2px; background: #000; }
.meter span.maj::before { height: 4px; }
.clip { width: 5px; margin-left: 2px; border: 1px solid #b0b0b0; border-width: 0 1px; background: linear-gradient(#b0b0b0, #b0b0b0) 0 14px / 100% 1px no-repeat; }
.tip { position: absolute; left: 153px; top: 6px; width: 166px; height: 16px; border: 1px solid #777; background: #fff; line-height: 15px; white-space: nowrap; text-align: center; }

.mixer { display: flex; align-items: flex-start; padding-top: 4px; padding-left: 5px; }
.mixer .slide { margin-left: 9px; margin-top: 1px; }
.spkicon { margin: 3px 5px 0 12px; }

/* Sliders: two end labels above a ticked rail */
.slide { width: 118px; height: 22px; display: flex; flex-wrap: wrap; justify-content: space-between; position: relative; line-height: 8px; padding: 0 1px; font-weight: bold; }
.slide input { appearance: none; position: absolute; left: -2px; bottom: 0; width: calc(100% + 4px); height: 16px; margin: 0; background:
  linear-gradient(#a4a4a4, #a4a4a4) 2px 9px / calc(100% - 4px) 1px no-repeat,
  repeating-linear-gradient(90deg, #b0b0b0 0 1px, transparent 1px 11px) 3px 6px / calc(100% - 6px) 3px no-repeat; }
.slide input::-webkit-slider-thumb { appearance: none; width: 13px; height: 16px; border: 0; background: url("data:image/svg+xml,%3Csvg xmlns='http://www.w3.org/2000/svg' width='13' height='16'%3E%3Cpath d='M3 1.500 H10 L11.500 3 V9.500 L6.500 14.500 L1.500 9.500 V3 Z' fill='%23ccccde' stroke='%23555568'/%3E%3Cpath d='M4 5.500 h5 M4 8.500 h5' stroke='%23777790'/%3E%3C/svg%3E") no-repeat; }
.slide.short { width: 88px; margin-left: 7px; margin-top: 3px; }

.edit { width: 367px; display: flex; }
.speed { width: 132px; display: flex; }
.devices { flex: none; width: 565px; display: flex; align-items: flex-start; padding: 2px 0 2px 1px; border-right: 1px solid #a0a0a0; box-shadow: 3px 0 0 #efefef, 4px 0 0 #a0a0a0; }
select { appearance: none; height: 23px; border: 1px solid #acacac; border-radius: 0; margin: 0; padding: 0 22px 0 4px; color: #000; text-overflow: clip;
  background: url("data:image/svg+xml,%3Csvg xmlns='http://www.w3.org/2000/svg' width='8' height='7'%3E%3Cpath d='M1 1 L4 5 L7 1' fill='none' stroke='%23555' stroke-width='1.800'/%3E%3C/svg%3E") right 4px center no-repeat, linear-gradient(#f0f0f0, #e6e6e6);
  font: 12px Roboto, "Noto Sans", sans-serif; }
.devices select { padding: 0 16px 0 3px; }
.w-host { width: 98px; }
.m1 { margin: 2px 1px 0 4px; }
.w-in { width: 155px; }
.w-ch { width: 102px; }
.m2 { margin: 5px 6px 0 6px; }
.w-out { width: 155px; }

/* Time ruler */
.timeline { flex: none; height: 28px; overflow: hidden; border-bottom: 1px solid #000; border-left: 1px solid #fff; box-shadow: inset 0 -1px #b8b8b8; }
.ticks { display: grid; grid-template-columns: repeat(22, 1fr); margin: 0 41px 0 -17px; height: 26px; }
.ticks span { position: relative; text-align: center; font: bold 12px/28px "Liberation Sans", Arial, sans-serif; height: 26px; }
.ticks span::before { content: ""; position: absolute; left: 50%; bottom: 0; width: 1px; height: 4px; background: #000; }
.ticks span::after { content: ""; position: absolute; right: 0; bottom: 0; width: 1px; height: 2px; background: #000; }

/* Track area */
.work { flex: 1; min-height: 0; display: flex; }
.tracks { flex: 1; min-width: 0; background: #a0a0a0; padding: 4px 4px 0; }
.track { display: flex; border: 1px solid #000; border-width: 1px 2px 2px 1px; box-shadow: 0 0 0 1px #ffff80, 0 0 0 2px #dcdc82, 0 0 0 3px #b8b88c; background: #c8c8d8; }
.panel { flex: none; width: 96px; border-right: 1px solid #000; height: 143px; }
.head { display: flex; height: 15px; gap: 1px; }
.head button, .mute button, .fold { border: 1px solid #fff; border-right-color: #909098; border-bottom-color: #909098; }
.x { width: 15px; }
.name { flex: 1; padding: 0 3px 0 1px; justify-content: space-between; }
.name .drop { border-width: 6px 6px 0; }
.info { height: 34px; padding: 0 0 0 3px; line-height: 16px; border-top: 1px solid #a0a0a8; }
.mute { display: flex; height: 16px; gap: 1px; border-top: 1px solid #909098; }
.mute button { flex: 1; }
.slide.small { width: 72px; height: 20px; margin: 8px 0 0 13px; }
.slide.small input { background:
  linear-gradient(#909098, #909098) 2px 9px / calc(100% - 4px) 1px no-repeat,
  repeating-linear-gradient(90deg, #fff 0 1px, transparent 1px 7px) 3px 5px / calc(100% - 6px) 4px no-repeat; }
.slide.pan { margin-top: 10px; font-size: 9px; font-weight: normal; }
.foot { display: flex; justify-content: space-between; align-items: center; margin: 3px 1px 0 18px; }
.fold { width: 62px; height: 17px; }
.vruler { flex: none; width: 31px; display: grid; grid-template-rows: 16px 42px 28px 43px 12px; align-items: center; justify-items: end; font-size: 12px; border-right: 1px solid #a8a8b0; border-left: 1px solid #eee; padding-right: 5px; line-height: 12px; }
.vruler span, .vruler b { position: relative; }
.vruler .t::after { content: ""; position: absolute; right: -5px; top: 6px; width: 3px; height: 1px; background: #000; }
.wave { flex: 1; min-width: 0; height: 143px; overflow: hidden; background: #c0c0c0; }
.peak { fill: #3232c8; }
.rms { fill: #6464dc; }

.thumb { background: #cdcdcd; }
.vscroll { flex: none; width: 17px; display: flex; flex-direction: column; border-left: 1px solid #fff; padding-right: 1px; }
.vscroll button { height: 16px; }
.vscroll .thumb { flex: 1; }
.vscroll button:last-child { height: 18px; }
.hscroll { flex: none; height: 17px; display: flex; border-top: 1px solid #fff; padding: 0 17px 0 135px; }
.hscroll button { width: 17px; }
.lane { flex: 1; display: flex; padding-left: 69%; }
.hscroll .thumb { width: 49px; margin-bottom: 1px; }

/* Selection bar */
.selbar { flex: none; height: 57px; display: flex; align-items: stretch; border-top: 1px solid #a0a0a0; border-bottom: 1px solid #a0a0a0; font-size: 12px; }
.selbar .grip { width: 11px; }
.field { display: flex; flex-direction: column; padding-top: 4px; margin-right: 7px; }
.field > label, .lbl, .radios { height: 17px; line-height: 17px; margin-bottom: 4px; }
.rate { width: 111px; margin: 0 7px 0 1px; white-space: nowrap; }
.rate select { width: 80px; }
.snap select { width: 101px; font-size: 13px; }
.snap { margin-right: 6px; }
.field select { font-family: "Liberation Sans", Arial, sans-serif; }
select.white { padding-bottom: 2px; background: #fff url("data:image/svg+xml,%3Csvg xmlns='http://www.w3.org/2000/svg' width='8' height='7'%3E%3Cpath d='M1 1 L4 5 L7 1' fill='none' stroke='%23555' stroke-width='1.800'/%3E%3C/svg%3E") right 4px center no-repeat; }
.sep { width: 1px; height: 26px; margin: 22px 6px 0 0; background: #a8a8a8; }
.radios { display: flex; gap: 11px; }
.radios label { display: flex; align-items: center; gap: 3px; }
.radios input { appearance: none; width: 13px; height: 13px; margin: 0; border: 1px solid #555; border-radius: 50%; background: #fff; }
.radios input:checked { background: radial-gradient(circle, #111 0 3px, #fff 4px); }
.time { display: flex; width: 147px; height: 21px; padding-left: 1px; border: 1px solid #808080; border-right-color: #fff; border-bottom-color: #fff; background: #c0c0c0; font-size: 14px; line-height: 20px; text-align: center; }
.time b { font-weight: normal; color: #1010c8; width: 10px; }
.time i { font-style: normal; width: 12px; }
.time .m { width: 18px; }
.time .dot { width: 6px; }
.time .s { width: 9px; }
.time button { margin-left: auto; width: 9px; background: #ececec; }
.time button::before { content: ""; border: 4px solid transparent; border-top: 5px solid #000; border-bottom: 0; }
.status { flex: none; height: 3px; background: #f4f4f4; }
```
